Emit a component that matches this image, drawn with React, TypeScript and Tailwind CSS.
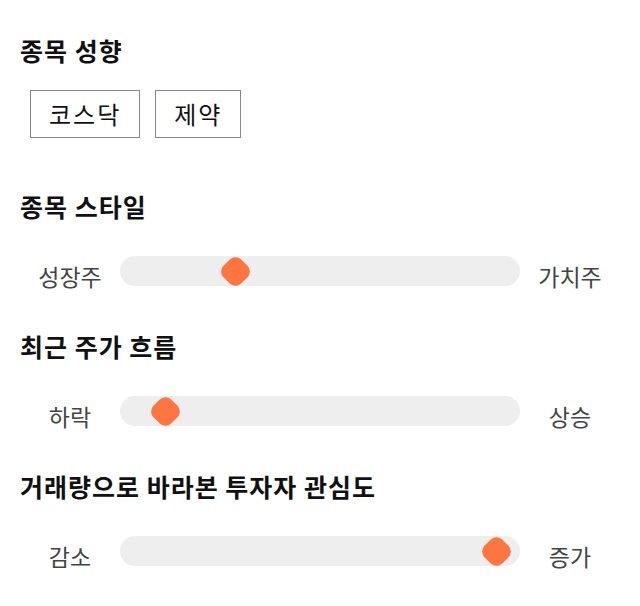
import React from "react";

const font = { fontFamily: '"Noto Sans CJK KR", "Noto Sans", sans-serif' };

function Slider({ left, right, pos }: { left: string; right: string; pos: number }) {
  return (
    <div className="flex items-center h-[30px]">
      <div className="w-[100px] text-center text-[23px] leading-[30px] mt-[9px] text-[#444]">{left}</div>
      <div className="relative w-[400px] h-[30px] rounded-full bg-[#eeeeee]">
        <div
          className="absolute top-[2.5px] w-[25px] h-[25px] -ml-[12.5px] rounded-[8px] rotate-45 bg-[#ff753f]"
          style={{ left: `${pos}px` }}
        />
      </div>
      <div className="w-[100px] text-center text-[23px] leading-[30px] mt-[9px] text-[#444]">{right}</div>
    </div>
  );
}

const heading = "text-[25px] leading-[36px] font-bold tracking-[1px] text-[#111]";
const chip = "border border-[#888] px-[18px] h-[48px] flex items-center text-[24px] tracking-[2px] text-[#111]";

export default function App() {
  return (
    <div className="w-[640px] h-[606px] bg-white px-[20px] pt-[32px]" style={font}>
      <h2 className={heading}>종목 성향</h2>
      <div className="flex gap-[15px] ml-[10px] mt-[22px]">
        <div className={chip}>코스닥</div>
        <div className={chip}>제약</div>
      </div>
      <h2 className={`${heading} mt-[50px]`}>종목 스타일</h2>
      <div className="mt-[32px]">
        <Slider left="성장주" right="가치주" pos={115} />
      </div>
      <h2 className={`${heading} mt-[42px]`}>최근 주가 흐름</h2>
      <div className="mt-[32px]">
        <Slider left="하락" right="상승" pos={45} />
      </div>
      <h2 className={`${heading} mt-[42px]`}>거래량으로 바라본 투자자 관심도</h2>
      <div className="mt-[32px]">
        <Slider left="감소" right="증가" pos={376} />
      </div>
    </div>
  );
}
